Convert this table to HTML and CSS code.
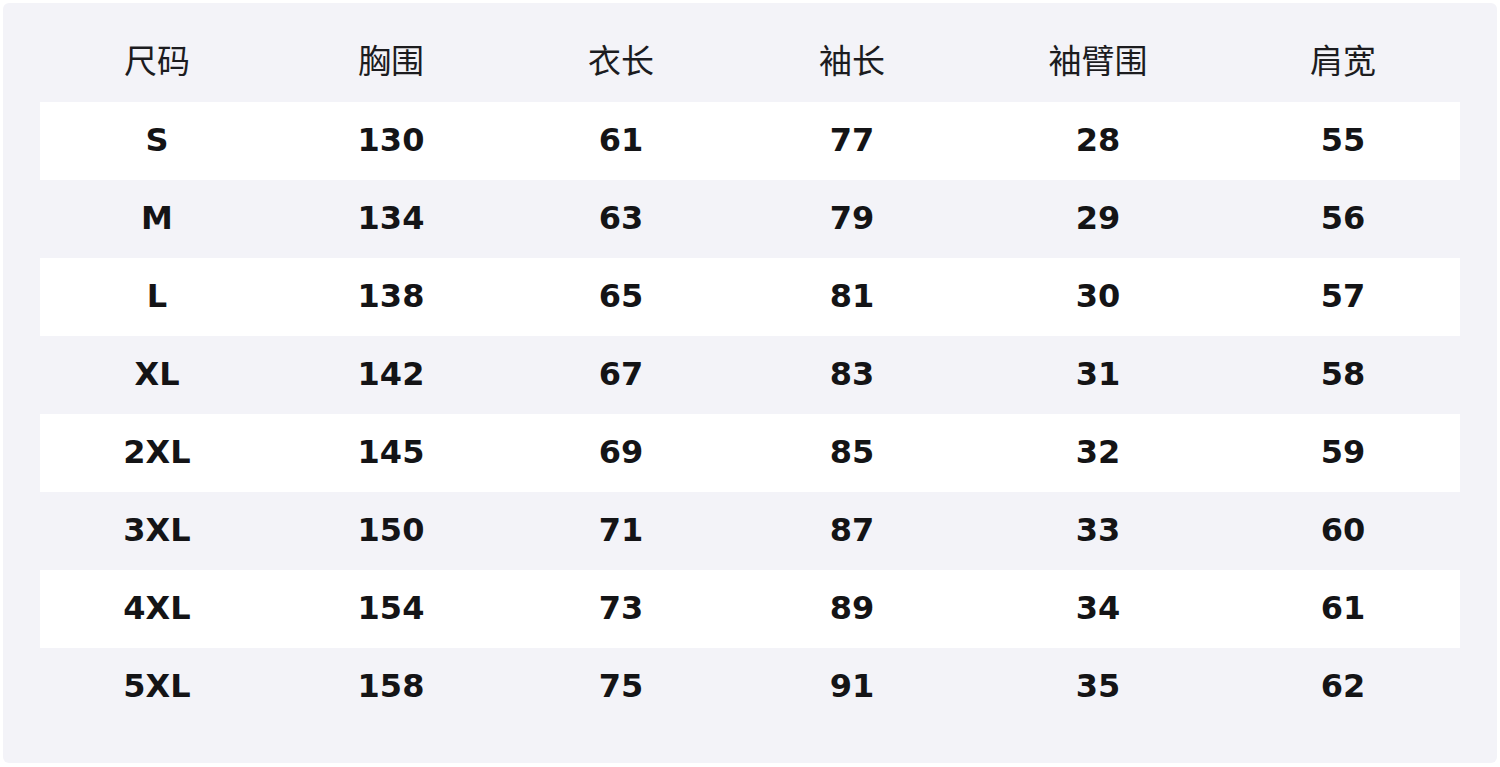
FILE: index.html
```html
<!DOCTYPE html>
<html lang="zh">
<head>
<meta charset="utf-8">
<title>尺码表</title>
<link rel="stylesheet" href="styles.css">
</head>
<body>
<div class="panel">
  <table class="size-table">
    <colgroup>
      <col class="c1"><col class="c2"><col class="c3"><col class="c4"><col class="c5"><col class="c6">
    </colgroup>
    <thead>
      <tr><th>尺码</th><th>胸围</th><th>衣长</th><th>袖长</th><th>袖臂围</th><th>肩宽</th></tr>
    </thead>
    <tbody>
      <tr class="odd"><td>S</td><td>130</td><td>61</td><td>77</td><td>28</td><td>55</td></tr>
      <tr><td>M</td><td>134</td><td>63</td><td>79</td><td>29</td><td>56</td></tr>
      <tr class="odd"><td>L</td><td>138</td><td>65</td><td>81</td><td>30</td><td>57</td></tr>
      <tr><td>XL</td><td>142</td><td>67</td><td>83</td><td>31</td><td>58</td></tr>
      <tr class="odd"><td>2XL</td><td>145</td><td>69</td><td>85</td><td>32</td><td>59</td></tr>
      <tr><td>3XL</td><td>150</td><td>71</td><td>87</td><td>33</td><td>60</td></tr>
      <tr class="odd"><td>4XL</td><td>154</td><td>73</td><td>89</td><td>34</td><td>61</td></tr>
      <tr><td>5XL</td><td>158</td><td>75</td><td>91</td><td>35</td><td>62</td></tr>
    </tbody>
  </table>
</div>
</body>
</html>
```
FILE: styles.css
```css
html, body {
  margin: 0;
  padding: 0;
  background: #ffffff;
}
body {
  padding: 3px;
  width: 1500px;
  height: 767px;
  box-sizing: border-box;
}
.panel {
  background: #f3f3f8;
  border-radius: 6px;
  height: 760px;
  box-sizing: border-box;
  padding: 21px 37px 0 37px;
}
.size-table {
  width: 1420px;
  border-collapse: collapse;
  table-layout: fixed;
}
.c1 { width: 234px; }
.c2 { width: 234px; }
.c3 { width: 226px; }
.c4 { width: 236px; }
.c5 { width: 256px; }
.c6 { width: 234px; }
.size-table th {
  height: 78px;
  padding: 0 0 8px 0;
  box-sizing: border-box;
  font-family: "Noto Sans CJK SC", "Noto Sans", sans-serif;
  font-weight: 400;
  font-size: 33px;
  color: #1c1c1f;
  text-align: center;
  vertical-align: middle;
}
.size-table td {
  height: 78px;
  padding: 0 0 3px 0;
  box-sizing: border-box;
  font-family: "DejaVu Sans", sans-serif;
  font-weight: 700;
  font-size: 32px;
  color: #141416;
  text-align: center;
  vertical-align: middle;
}
.size-table tr.odd td {
  background: #ffffff;
}
```
